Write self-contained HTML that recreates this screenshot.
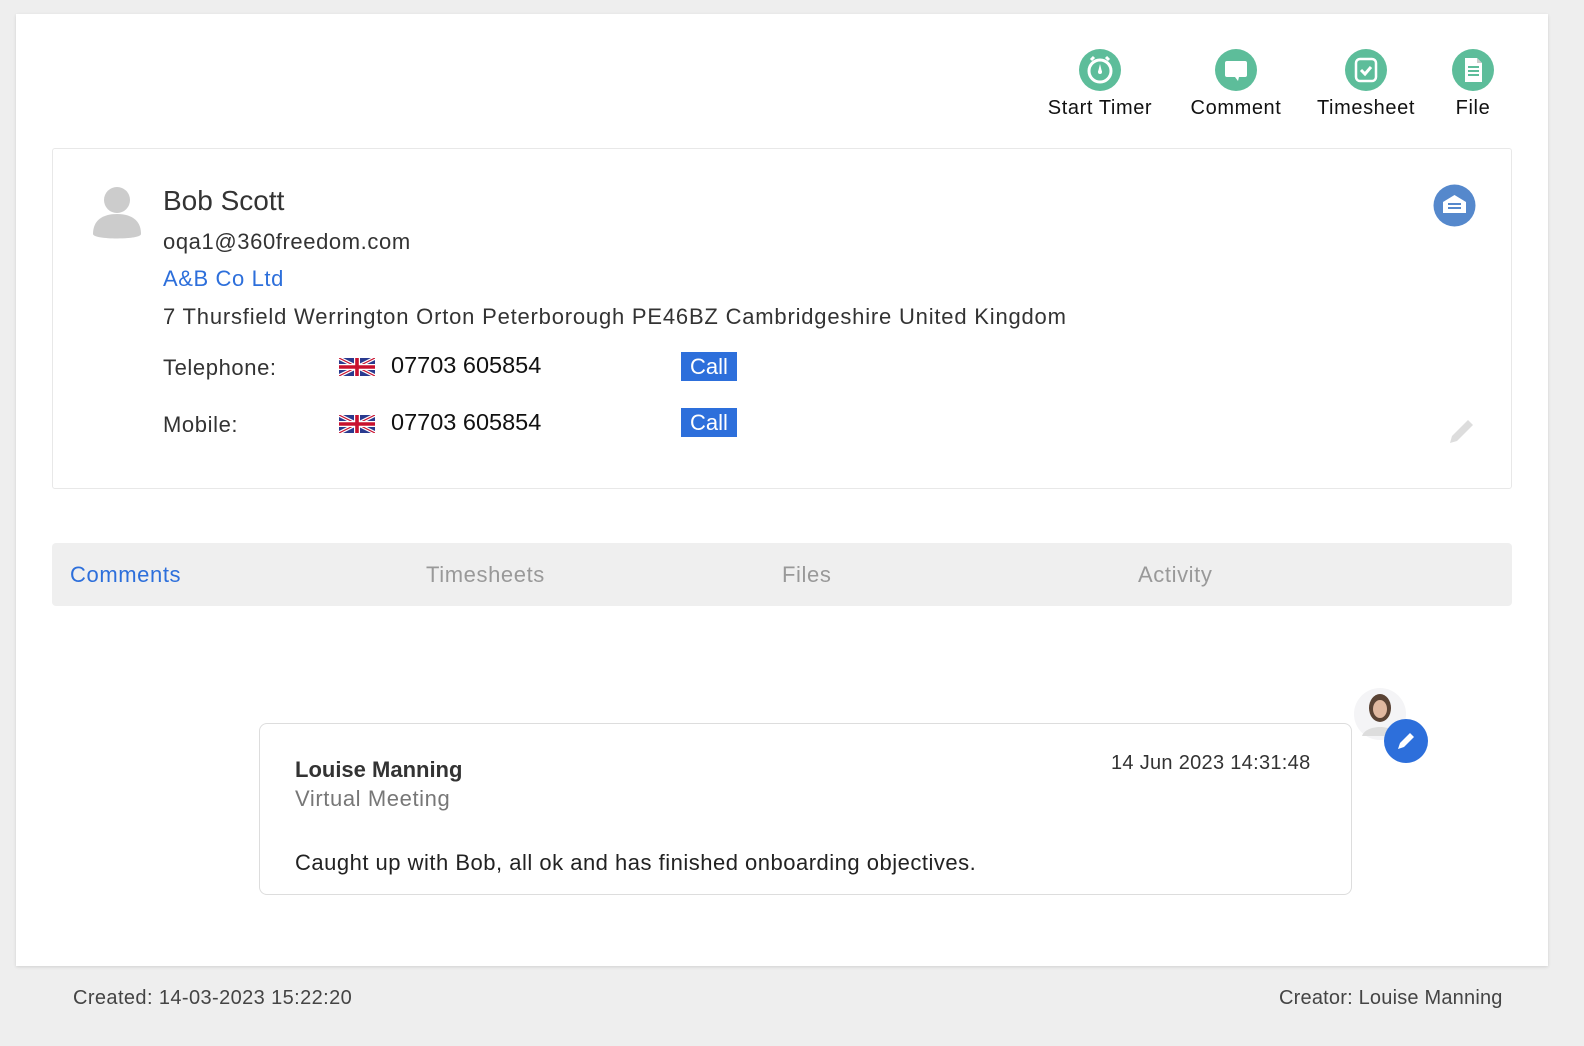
<!DOCTYPE html>
<html><head><meta charset="utf-8"><style>
body{margin:0;width:1584px;height:1046px;background:#eeeeee;font-family:"Liberation Sans",sans-serif;position:relative;overflow:hidden;color:#333;letter-spacing:0.6px}
.a{position:absolute}
.card{left:16px;top:14px;width:1532px;height:952px;background:#fff;box-shadow:0 1px 3px rgba(0,0,0,.12)}
.act{text-align:center;font-size:20px;color:#111;white-space:nowrap}
.ic{width:42px;height:42px;border-radius:50%;background:#5dbd9a;margin:0 auto 6px}
.box{left:52px;top:148px;width:1458px;height:339px;border:1px solid #e8e8e8;border-radius:3px}
.call{background:#2d6fdb;color:#fff;font-size:22px;padding:0 9px;height:29px;line-height:29px;letter-spacing:0}
.num{font-size:23.5px;color:#111;letter-spacing:0}
.flag{width:36px;height:18px}
</style></head><body>
<div class="a card"></div>
<div class="a act" style="left:1040px;top:49px;width:120px"><div class="ic"><svg width="42" height="42" viewBox="0 0 42 42"><circle cx="21" cy="22" r="11" fill="none" stroke="#fff" stroke-width="3"/><path d="M12 11l3-3M30 11l-3-3" stroke="#fff" stroke-width="3"/><path d="M21 15l2 8h-4z" fill="#fff"/><circle cx="21" cy="23" r="2" fill="#fff"/></svg></div>Start Timer</div>
<div class="a act" style="left:1180px;top:49px;width:112px"><div class="ic"><svg width="42" height="42"><rect x="10" y="12" width="22" height="16" rx="2" fill="#fff"/><path d="M20 28l3 4 1-4z" fill="#fff"/></svg></div>Comment</div>
<div class="a act" style="left:1310px;top:49px;width:112px"><div class="ic"><svg width="42" height="42"><rect x="11" y="10" width="20" height="22" rx="4" fill="none" stroke="#fff" stroke-width="2.5"/><path d="M16 21l4 4 6-7" fill="none" stroke="#fff" stroke-width="3"/></svg></div>Timesheet</div>
<div class="a act" style="left:1448px;top:49px;width:50px"><div class="ic"><svg width="42" height="42"><path d="M13 9h12l5 5v19H13z" fill="#fff"/><path d="M25 9v5h5" fill="#ccc"/><path d="M16 18h11M16 22h11M16 26h11" stroke="#5dbd9a" stroke-width="2"/></svg></div>File</div>
<div class="a box"></div>
<svg class="a" style="left:91px;top:186px" width="52" height="56"><circle cx="26" cy="14" r="13" fill="#ccc"/><path d="M2 48c0-14 10-20 24-20s24 6 24 20c0 6-48 6-48 0z" fill="#ccc"/></svg>
<div class="a" style="left:163px;top:185px;font-size:28px;color:#333;letter-spacing:0">Bob Scott</div>
<div class="a" style="left:163px;top:229px;font-size:22px;color:#333">oqa1@360freedom.com</div>
<div class="a" style="left:163px;top:266px;font-size:22px;color:#2d6fdb">A&amp;B Co Ltd</div>
<div class="a" style="left:163px;top:304px;font-size:22px;color:#333;letter-spacing:0.8px">7 Thursfield Werrington Orton Peterborough PE46BZ Cambridgeshire United Kingdom</div>
<div class="a" style="left:163px;top:355px;font-size:22px">Telephone:</div>
<div class="a" style="left:163px;top:412px;font-size:22px">Mobile:</div>
<svg class="a flag" style="left:339px;top:358px" viewBox="0 0 60 30"><rect width="60" height="30" fill="#2a3a8f"/><path d="M0 0L60 30M60 0L0 30" stroke="#fff" stroke-width="6"/><path d="M0 0L60 30M60 0L0 30" stroke="#c8102e" stroke-width="2"/><path d="M30 0v30M0 15h60" stroke="#fff" stroke-width="10"/><path d="M30 0v30M0 15h60" stroke="#c8102e" stroke-width="6"/></svg>
<svg class="a flag" style="left:339px;top:415px" viewBox="0 0 60 30"><rect width="60" height="30" fill="#2a3a8f"/><path d="M0 0L60 30M60 0L0 30" stroke="#fff" stroke-width="6"/><path d="M0 0L60 30M60 0L0 30" stroke="#c8102e" stroke-width="2"/><path d="M30 0v30M0 15h60" stroke="#fff" stroke-width="10"/><path d="M30 0v30M0 15h60" stroke="#c8102e" stroke-width="6"/></svg>
<div class="a num" style="left:391px;top:352px">07703 605854</div>
<div class="a num" style="left:391px;top:409px">07703 605854</div>
<div class="a call" style="left:681px;top:352px">Call</div>
<div class="a call" style="left:681px;top:408px">Call</div>
<svg class="a" style="left:1433px;top:184px" width="43" height="43"><circle cx="21.5" cy="21.5" r="21" fill="#5588cc"/><path d="M10 18l11.5-7 11.5 7v11H10z" fill="#fff"/><path d="M15 20h13M15 24h13" stroke="#5588cc" stroke-width="2"/></svg>
<svg class="a" style="left:1446px;top:415px" width="32" height="32"><path d="M4 28l2-7 16-16 5 5-16 16z" fill="#ddd"/></svg>
<div class="a" style="left:52px;top:543px;width:1460px;height:63px;background:#efefef;border-radius:4px"></div>
<div class="a" style="left:70px;top:562px;font-size:22px;color:#2d6fdb">Comments</div>
<div class="a" style="left:426px;top:562px;font-size:22px;color:#999">Timesheets</div>
<div class="a" style="left:782px;top:562px;font-size:22px;color:#999">Files</div>
<div class="a" style="left:1138px;top:562px;font-size:22px;color:#999">Activity</div>
<div class="a" style="left:259px;top:723px;width:1091px;height:170px;border:1px solid #ddd;border-radius:8px"></div>
<div class="a" style="left:295px;top:757px;font-size:22px;font-weight:bold;color:#333;letter-spacing:0">Louise Manning</div>
<div class="a" style="left:295px;top:786px;font-size:22px;color:#777">Virtual Meeting</div>
<div class="a" style="left:1111px;top:752px;font-size:20px;color:#333;letter-spacing:0.3px">14 Jun 2023 14:31:48</div>
<div class="a" style="left:295px;top:850px;font-size:22px;color:#222;letter-spacing:0.5px">Caught up with Bob, all ok and has finished onboarding objectives.</div>
<svg class="a" style="left:1354px;top:686px" width="76" height="78"><circle cx="26" cy="28" r="26" fill="#f4f4f6"/><ellipse cx="26" cy="22" rx="11" ry="14" fill="#5a4335"/><ellipse cx="26" cy="23" rx="7" ry="9" fill="#e0b8a0"/><path d="M8 50c4-12 32-12 36 0z" fill="#ddd"/><circle cx="52" cy="55" r="22" fill="#2d6fdb"/><path d="M44 63l2-6 10-10 4 4-10 10z" fill="#fff"/></svg>
<div class="a" style="left:73px;top:987px;font-size:20px;color:#444;letter-spacing:0.4px">Created: 14-03-2023 15:22:20</div>
<div class="a" style="left:1279px;top:987px;font-size:20px;color:#444;letter-spacing:0.2px">Creator: Louise Manning</div>
</body></html>
